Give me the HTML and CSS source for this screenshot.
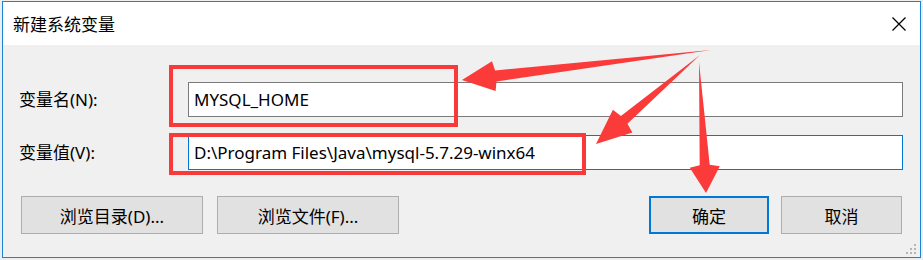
FILE: index.html
```html
<!DOCTYPE html>
<html lang="zh-CN">
<head>
    <meta charset="UTF-8">
    <title>新建系统变量</title>
    <link rel="stylesheet" href="styles.css">
</head>
<body>
    <div class="window">
        <!-- Title bar -->
        <div class="titlebar">
            <span class="title">新建系统变量</span>
            <svg class="close" width="14" height="14" viewBox="0 0 14 14">
                <path d="M0.5 0.5 L13.5 13.5 M13.5 0.5 L0.5 13.5" stroke="#000" stroke-width="1.3" fill="none"/>
            </svg>
        </div>

        <!-- Dialog body -->
        <div class="dialog-body">
            <div class="field">
                <label>变量名(N):</label>
                <div class="text-input">MYSQL_HOME</div>
            </div>
            <div class="field">
                <label>变量值(V):</label>
                <div class="text-input focused">D:\Program Files\Java\mysql-5.7.29-winx64</div>
            </div>
            <div class="actions">
                <div class="btn-group">
                    <button class="btn btn-wide">浏览目录(D)...</button>
                    <button class="btn btn-wide">浏览文件(F)...</button>
                </div>
                <div class="btn-group btn-group-right">
                    <button class="btn btn-default">确定</button>
                    <button class="btn">取消</button>
                </div>
            </div>
            <svg class="grip" width="10" height="10" viewBox="0 0 10 10">
                <rect x="8" y="0" width="2" height="2" fill="#b5b5b5"/>
                <rect x="4" y="4" width="2" height="2" fill="#b5b5b5"/>
                <rect x="8" y="4" width="2" height="2" fill="#b5b5b5"/>
                <rect x="0" y="8" width="2" height="2" fill="#b5b5b5"/>
                <rect x="4" y="8" width="2" height="2" fill="#b5b5b5"/>
                <rect x="8" y="8" width="2" height="2" fill="#b5b5b5"/>
            </svg>
        </div>
    </div>

    <!-- Annotations drawn over the dialog -->
    <div class="mark mark-name"></div>
    <div class="mark mark-value"></div>
    <svg class="arrows" width="923" height="260" viewBox="0 0 923 260">
        <polygon points="462,80 492,61.3 495.1,70.5 711,50 496.5,81.5 495.6,91.1" />
        <polygon points="596,144 612.9,109.8 620.9,116.1 700,55 627.4,123.7 632.4,132.6" />
        <polygon points="706,193 689.8,167.7 699.7,165.2 699,62 709.7,164.8 719.8,166.3" />
    </svg>
</body>
</html>
```

FILE: styles.css
```css
* {
    margin: 0;
    padding: 0;
    box-sizing: border-box;
}

body {
    font-family: "Noto Sans", "Noto Sans CJK SC", sans-serif;
    font-size: 17px;
    color: #000;
    background: #eeeeee;
    width: 923px;
    height: 260px;
    overflow: hidden;
    position: relative;
}

.window {
    margin: 1px 0 0 2px;
    width: 919px;
    height: 257px;
    border: 1px solid #1883d7;
    background: #f0f0f0;
    display: flex;
    flex-direction: column;
}

.titlebar {
    height: 43px;
    background: #fff;
    display: flex;
    align-items: center;
    justify-content: space-between;
    padding: 0 14px 0 10px;
    flex-shrink: 0;
}

.title {
    font-family: "Noto Sans CJK SC", sans-serif;
    font-size: 17px;
    line-height: 20px;
}

.dialog-body {
    flex: 1;
    display: flex;
    flex-direction: column;
    padding: 37px 17px 3px 16px;
}

.field {
    display: flex;
    align-items: center;
    margin-bottom: 18px;
}

.field label {
    width: 169px;
    line-height: 20px;
}

.text-input {
    flex: 1;
    height: 35px;
    background: #fff;
    border: 1px solid #7a7a7a;
    padding: 0 5px;
    display: flex;
    align-items: center;
    white-space: nowrap;
}

.text-input.focused {
    border-color: #0078d7;
}

.actions {
    display: flex;
    justify-content: space-between;
    margin-top: 8px;
    padding-left: 2px;
}

.btn-group {
    display: flex;
    gap: 14px;
}

.btn-group-right {
    gap: 12px;
    margin-right: 1px;
}

.btn {
    font-family: "Noto Sans", "Noto Sans CJK SC", sans-serif;
    font-size: 17px;
    height: 38px;
    width: 121px;
    background: #e1e1e1;
    border: 1px solid #adadad;
    color: #000;
}

.btn-wide {
    width: 182px;
}

.btn-default {
    width: 120px;
    border: 2px solid #0078d7;
}

.grip {
    align-self: flex-end;
    margin-top: auto;
    margin-right: -13px;
}

.mark {
    position: absolute;
    border: 4px solid #f83a3a;
}

.mark-name {
    left: 169px;
    top: 65px;
    width: 289px;
    height: 62px;
}

.mark-value {
    left: 169px;
    top: 133px;
    width: 417px;
    height: 42px;
}

.arrows {
    position: absolute;
    left: 0;
    top: 0;
    fill: #fb3a3a;
}
```
